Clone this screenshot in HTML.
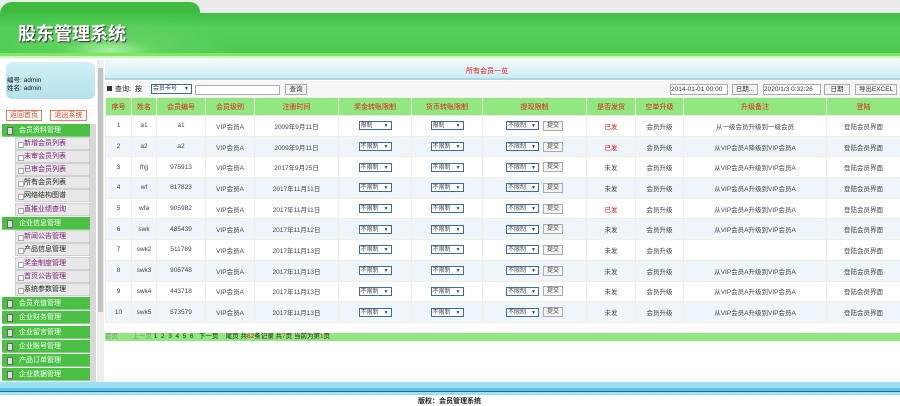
<!DOCTYPE html>
<html><head><meta charset="utf-8">
<style>
*{margin:0;padding:0;box-sizing:border-box}
body{width:900px;height:405px;overflow:hidden;background:#fff;font-family:"Liberation Sans","Noto Sans CJK SC",sans-serif;font-size:7px;color:#333;position:relative}
.a{position:absolute}
.hdr{left:0;top:0;width:900px;height:58px;background:#ececec}
.grn{left:0;top:13px;width:900px;height:40px;background:linear-gradient(#3fbf45,#55cf5a 40%,#4cc852)}
.tab{left:0;top:2px;width:200px;height:14px;background:#3fbb40;border-radius:12px 10px 0 0}
.title{left:18px;top:20px;font-size:18px;font-weight:bold;color:#fff;text-shadow:1px 1px 1px #333;letter-spacing:0px}
.hl{left:0;top:53px;width:900px;height:3px;background:#7ee85a}
.hl2{left:0;top:56px;width:900px;height:2px;background:#c8f8c0}
.userbox{left:6px;top:62px;width:89px;height:37px;background:linear-gradient(#d0f0f6,#b6e2ea);border-radius:6px}
.btn{height:11px;border:1px solid #e08060;background:#fff;color:#e04020;font-size:7px;text-align:center;line-height:9px}
.mg{left:2px;width:88px;height:13px;background:#4cc045;color:#fff;padding-left:17px;line-height:13px;border-bottom:1px solid #7ad67a}
.mg:before{content:"";position:absolute;left:5px;top:3px;width:4px;height:6px;background:#ddd;border:1px solid #666}
.ms{left:15px;width:75px;height:13px;background:#e8e8e8;border:1px solid #d0d0d0;color:#222;line-height:12px;padding-left:8px}
.ms:before{content:"";position:absolute;left:2px;top:4px;width:4px;height:4px;border:1px solid #aaa;background:#fff}
.pu{color:#7a1a7a}
.side{left:90px;top:124px;width:6px;height:258px;background:#d8d8d8}
.sb{left:97px;top:60px;width:7px;height:322px;background:#eee}
.sbt{left:98px;top:68px;width:5px;height:244px;background:#c2c2c2}
.tbar{left:105px;top:58px;width:795px;height:22px;background:linear-gradient(#f6fcfd,#cdebf2);border-bottom:2px solid #a8d8e4}
table{position:absolute;left:105px;top:97px;width:795px;border-collapse:collapse;table-layout:fixed}
th{background:#92e880;color:#e02020;font-weight:normal;height:18px;border:1px solid #f0ece0;font-size:7px}
td{height:20.7px;border:1px solid #f3efe2;text-align:center;font-size:6.5px;color:#444}
tr:nth-child(odd) td{background:#eef6fc}
.sel{display:inline-block;width:33px;height:9px;border:1px solid #3a6aa8;background:#fff;font-size:6px;text-align:left;padding-left:1px;line-height:8px;position:relative;vertical-align:middle}
.sel:after{content:"▼";position:absolute;right:2px;top:0;font-size:5px}
.sub{display:inline-block;width:20px;height:10px;border:1px solid #aaa;background:#f4f4f4;font-size:6px;line-height:8px;vertical-align:middle;margin-left:4px}
.r{color:#f01010}
.tb{height:11px;border:1px solid #aaa;background:#f4f4f4;font-size:6.5px;line-height:9px;text-align:center}
.pg{left:105px;top:333px;width:795px;height:8px;background:#92e880;font-size:6.5px;line-height:8px;color:#222}
</style></head><body>
<div class="a hdr"></div>
<div class="a tab"></div>
<div class="a grn"></div>
<div class="a" style="left:0;top:10px;width:260px;height:43px;background:radial-gradient(ellipse at 110px 40px,#a8f0a0 0,#62d460 20%,rgba(80,200,80,0) 60%)"></div>
<div class="a title">股东管理系统</div>
<div class="a hl"></div><div class="a hl2"></div>

<div class="a userbox"></div>
<div class="a" style="left:7px;top:77px;font-size:6.5px;line-height:8px;color:#111">编号: admin<br>姓名: admin</div>
<div class="a btn" style="left:6px;top:110px;width:36px">返回首页</div>
<div class="a btn" style="left:50px;top:110px;width:37px">退出系统</div>
<div class="a side"></div>
<div class="a mg" style="top:124px">会员资料管理</div>
<div class="a ms pu" style="top:137px">新增会员列表</div>
<div class="a ms pu" style="top:150px">未审会员列表</div>
<div class="a ms pu" style="top:163px">已审会员列表</div>
<div class="a ms" style="top:176px">所有会员列表</div>
<div class="a ms" style="top:189px">网络结构图谱</div>
<div class="a ms pu" style="top:203px">直推业绩查询</div>
<div class="a mg" style="top:217px">企业信息管理</div>
<div class="a ms pu" style="top:230px">新闻公告管理</div>
<div class="a ms" style="top:243px">产品信息管理</div>
<div class="a ms pu" style="top:257px">奖金制度管理</div>
<div class="a ms pu" style="top:270px">首页公告管理</div>
<div class="a ms" style="top:283px">系统参数管理</div>
<div class="a mg" style="top:297px">会员充值管理</div>
<div class="a mg" style="top:311px">企业财务管理</div>
<div class="a mg" style="top:326px">企业留言管理</div>
<div class="a mg" style="top:340px">企业账号管理</div>
<div class="a mg" style="top:354px">产品订单管理</div>
<div class="a mg" style="top:368px">企业数据管理</div>
<div class="a sb"></div><div class="a sbt"></div>

<div class="a tbar"></div>
<div class="a r" style="left:466px;top:66px;font-size:7px">所有会员一览</div>
<div class="a" style="left:105px;top:81px;width:795px;height:15px;background:#f6f6f6"></div>
<div class="a" style="left:107px;top:86px;width:5px;height:5px;background:#333"></div>
<div class="a" style="left:115px;top:84px;font-size:7px;color:#222">查询:&nbsp; 按</div>
<div class="a sel" style="left:151px;top:84px;width:41px;height:10px">会员卡号</div>
<div class="a" style="left:195px;top:85px;width:85px;height:10px;border:1px solid #aac;background:#fff"></div>
<div class="a tb" style="left:285px;top:84px;width:22px">查询</div>
<div class="a" style="left:670px;top:84px;width:58px;height:11px;border:1px solid #aaa;background:#fff;font-size:6.5px;line-height:9px">2014-01-01 00:00</div>
<div class="a tb" style="left:732px;top:84px;width:26px">日期...</div>
<div class="a" style="left:763px;top:84px;width:58px;height:11px;border:1px solid #aaa;background:#fff;font-size:6.5px;line-height:9px">2020/1/3 0:32:26</div>
<div class="a tb" style="left:824px;top:84px;width:26px">日期</div>
<div class="a tb" style="left:855px;top:84px;width:42px">导出EXCEL</div>

<table>
<colgroup><col style="width:26px"><col style="width:25px"><col style="width:49px"><col style="width:49px"><col style="width:84px"><col style="width:73px"><col style="width:71px"><col style="width:104px"><col style="width:49px"><col style="width:48px"><col style="width:143px"><col style="width:74px"></colgroup>
<tr><th>序号</th><th>姓名</th><th>会员编号</th><th>会员级别</th><th>注册时间</th><th>奖金转账限制</th><th>货币转账限制</th><th>提现限制</th><th>是否发货</th><th>空单升级</th><th>升级备注</th><th>登陆</th></tr>
<tr><td>1</td><td>a1</td><td>a1</td><td>VIP会员A</td><td>2009年9月11日</td><td><span class="sel">限制</span></td><td><span class="sel">限制</span></td><td><span class="sel">不限制</span><span class="sub">提交</span></td><td class="r">已发</td><td>会员升级</td><td>从一级会员升级到一级会员</td><td>登陆会员界面</td></tr>
<tr><td>2</td><td>a2</td><td>a2</td><td>VIP会员A</td><td>2009年9月11日</td><td><span class="sel">不限制</span></td><td><span class="sel">不限制</span></td><td><span class="sel">不限制</span><span class="sub">提交</span></td><td class="r">已发</td><td>会员升级</td><td>从VIP会员A降级到VIP会员A</td><td>登陆会员界面</td></tr>
<tr><td>3</td><td>fhjj</td><td>975913</td><td>VIP会员A</td><td>2017年9月25日</td><td><span class="sel">不限制</span></td><td><span class="sel">不限制</span></td><td><span class="sel">不限制</span><span class="sub">提交</span></td><td>未发</td><td>会员升级</td><td>从VIP会员A升级到VIP会员A</td><td>登陆会员界面</td></tr>
<tr><td>4</td><td>wf</td><td>817823</td><td>VIP会员A</td><td>2017年11月11日</td><td><span class="sel">不限制</span></td><td><span class="sel">不限制</span></td><td><span class="sel">不限制</span><span class="sub">提交</span></td><td>未发</td><td>会员升级</td><td>从VIP会员A升级到VIP会员A</td><td>登陆会员界面</td></tr>
<tr><td>5</td><td>wfa</td><td>905982</td><td>VIP会员A</td><td>2017年11月11日</td><td><span class="sel">不限制</span></td><td><span class="sel">不限制</span></td><td><span class="sel">不限制</span><span class="sub">提交</span></td><td class="r">已发</td><td>会员升级</td><td>从VIP会员A升级到VIP会员A</td><td>登陆会员界面</td></tr>
<tr><td>6</td><td>swk</td><td>485439</td><td>VIP会员A</td><td>2017年11月12日</td><td><span class="sel">不限制</span></td><td><span class="sel">不限制</span></td><td><span class="sel">不限制</span><span class="sub">提交</span></td><td>未发</td><td>会员升级</td><td>从VIP会员A升级到VIP会员A</td><td>登陆会员界面</td></tr>
<tr><td>7</td><td>swk2</td><td>511789</td><td>VIP会员A</td><td>2017年11月13日</td><td><span class="sel">不限制</span></td><td><span class="sel">不限制</span></td><td><span class="sel">不限制</span><span class="sub">提交</span></td><td>未发</td><td>会员升级</td><td></td><td>登陆会员界面</td></tr>
<tr><td>8</td><td>swk3</td><td>905748</td><td>VIP会员A</td><td>2017年11月13日</td><td><span class="sel">不限制</span></td><td><span class="sel">不限制</span></td><td><span class="sel">不限制</span><span class="sub">提交</span></td><td>未发</td><td>会员升级</td><td>从VIP会员A升级到VIP会员A</td><td>登陆会员界面</td></tr>
<tr><td>9</td><td>swk4</td><td>443718</td><td>VIP会员A</td><td>2017年11月13日</td><td><span class="sel">不限制</span></td><td><span class="sel">不限制</span></td><td><span class="sel">不限制</span><span class="sub">提交</span></td><td>未发</td><td>会员升级</td><td>从VIP会员A升级到VIP会员A</td><td>登陆会员界面</td></tr>
<tr><td>10</td><td>swk5</td><td>573579</td><td>VIP会员A</td><td>2017年11月13日</td><td><span class="sel">不限制</span></td><td><span class="sel">不限制</span></td><td><span class="sel">不限制</span><span class="sub">提交</span></td><td>未发</td><td>会员升级</td><td>从VIP会员A升级到VIP会员A</td><td>登陆会员界面</td></tr>
</table>

<div class="a pg"><span style="color:#888">首页 &nbsp;&nbsp;&nbsp;&nbsp;&nbsp;&nbsp;&nbsp;上一页</span> 1 &nbsp;2 &nbsp;3 &nbsp;4 &nbsp;5 &nbsp;6 &nbsp; 下一页 &nbsp;&nbsp; 尾页 共<span class="r">62</span>条记录 共<span class="r">7</span>页 当前为第<span class="r">1</span>页</div>

<div class="a" style="left:0;top:382px;width:900px;height:6px;background:#9ae0f6"></div>
<div class="a" style="left:0;top:388px;width:900px;height:3px;background:#5ec4e4"></div>
<div class="a" style="left:0;top:391px;width:900px;height:1px;background:#2a6a88"></div>
<div class="a" style="left:0;top:392px;width:900px;height:3px;background:#9ae0f6"></div>
<div class="a" style="left:418px;top:396px;font-size:7px;font-weight:bold;color:#222">版权：会员管理系统</div>
</body></html>
